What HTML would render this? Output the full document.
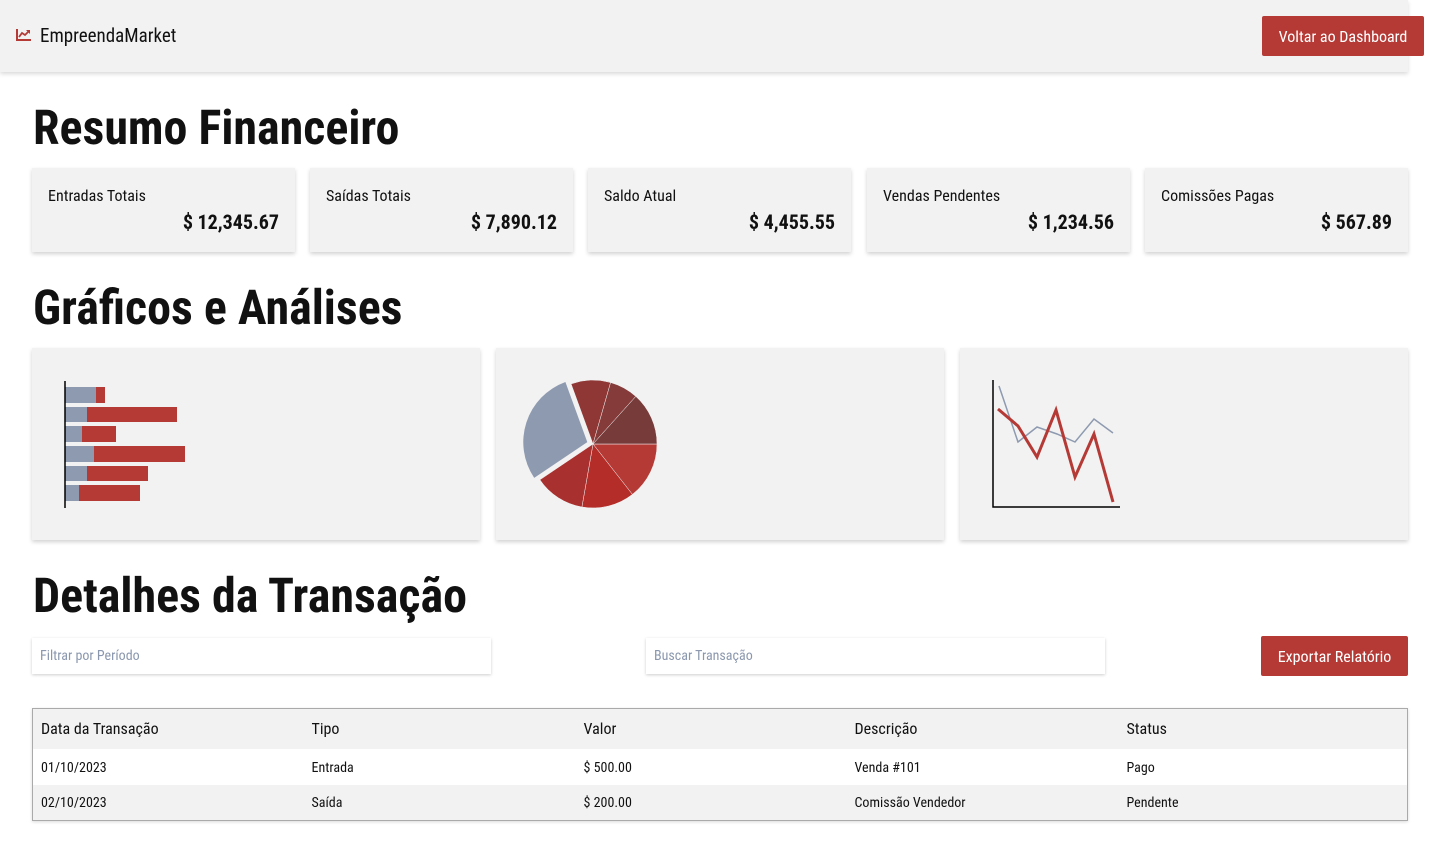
<!DOCTYPE html>
<html><head><meta charset="utf-8"><style>
*{margin:0;padding:0;box-sizing:border-box}
body{width:1430px;height:850px;background:#fff;font-family:"Roboto Condensed","Liberation Sans Narrow","Liberation Sans",sans-serif;color:#111;position:relative;overflow:hidden}
.abs{position:absolute}
.hdr{left:0;top:0;width:1408px;height:72px;background:#f2f2f2;box-shadow:0 2px 4px rgba(0,0,0,.15)}
.btn{background:#b53a36;color:#fff;font-size:16px;display:flex;align-items:center;justify-content:center;border-radius:2px}
h1{position:absolute;left:33px;font-size:48px;font-weight:bold;letter-spacing:0}
.card{background:#f2f2f2;box-shadow:0 2px 4px rgba(0,0,0,.18);top:168px;width:263px;height:84px}
.card .l{position:absolute;left:16px;top:18px;font-size:16px}
.card .v{position:absolute;right:16px;top:42px;font-size:20px;font-weight:bold}
.ch{top:348px;width:448px;height:192px;background:#f2f2f2;box-shadow:0 2px 4px rgba(0,0,0,.18)}
.inp{top:638px;width:459px;height:36px;background:#fff;box-shadow:0 1px 3px rgba(0,0,0,.2);font-size:14px;color:#8a97ad;padding:10px 8px}
table{position:absolute;left:32px;top:708px;width:1376px;border:1px solid #aaa;border-collapse:collapse;box-shadow:0 1px 3px rgba(0,0,0,.15);table-layout:fixed}
td,th{text-align:left;font-weight:normal;padding:0 8px}
th{height:40px;background:#f2f2f2;font-size:16px}
td{height:36px;font-size:14px;padding-top:2px}
tr.g td{background:#f2f2f2}
</style></head><body>
<div class="abs hdr"></div>
<svg class="abs" style="left:16px;top:28px" width="16" height="14" viewBox="0 0 16 14"><path d="M1 1V12H15" stroke="#b53a36" stroke-width="2" fill="none"/><path d="M3 9L6 5L9 7L13 3" stroke="#b53a36" stroke-width="1.8" fill="none"/><path d="M10 2H14V6Z" fill="#b53a36"/></svg>
<div class="abs" style="left:40px;top:24px;font-size:19px">EmpreendaMarket</div>
<div class="abs btn" style="left:1262px;top:16px;width:162px;height:40px">Voltar ao Dashboard</div>
<h1 style="top:99px">Resumo Financeiro</h1>
<div class="abs card" style="left:32px"><div class="l">Entradas Totais</div><div class="v">$ 12,345.67</div></div>
<div class="abs card" style="left:310px"><div class="l">Saídas Totais</div><div class="v">$ 7,890.12</div></div>
<div class="abs card" style="left:588px"><div class="l">Saldo Atual</div><div class="v">$ 4,455.55</div></div>
<div class="abs card" style="left:867px"><div class="l">Vendas Pendentes</div><div class="v">$ 1,234.56</div></div>
<div class="abs card" style="left:1145px"><div class="l">Comissões Pagas</div><div class="v">$ 567.89</div></div>
<h1 style="top:279px">Gráficos e Análises</h1>
<div class="abs ch" style="left:32px"></div>
<div class="abs ch" style="left:496px"></div>
<div class="abs ch" style="left:960px"></div>
<svg class="abs" style="left:0;top:0" width="1430" height="850">
<g fill="#8e9ab0"><rect x="65" y="387" width="31" height="16"/><rect x="65" y="407" width="22" height="15"/><rect x="65" y="426" width="17" height="16"/><rect x="65" y="446" width="29" height="16"/><rect x="65" y="466" width="22" height="15"/><rect x="65" y="485" width="14" height="16"/></g>
<g fill="#b53a36"><rect x="96" y="387" width="9" height="16"/><rect x="87" y="407" width="90" height="15"/><rect x="82" y="426" width="34" height="16"/><rect x="94" y="446" width="91" height="16"/><rect x="87" y="466" width="61" height="15"/><rect x="79" y="485" width="61" height="16"/></g>
<line x1="65" y1="381" x2="65" y2="508" stroke="#000" stroke-width="1.5"/>
<g stroke="#f2f2f2" stroke-width="0.5">
<path d="M593 444L657 444A64 64 0 0 1 632.4 494.4Z" fill="#b53a36"/>
<path d="M593 444L632.4 494.4A64 64 0 0 1 581.9 507Z" fill="#b52d28"/>
<path d="M593 444L581.9 507A64 64 0 0 1 539.9 479.8Z" fill="#a8302e"/>
<path d="M593 444L571.1 383.9A64 64 0 0 1 610.6 382.5Z" fill="#8e3735"/>
<path d="M593 444L610.6 382.5A64 64 0 0 1 635.8 396.4Z" fill="#843b39"/>
<path d="M593 444L635.8 396.4A64 64 0 0 1 657 444Z" fill="#773b3a"/>
</g>
<path d="M587.3 442.1L534.2 477.9A64 64 0 0 1 565.4 382Z" fill="#8e9ab0"/>
<path d="M993 380V507H1120" stroke="#000" stroke-width="1.5" fill="none"/>
<polyline points="999,386 1018,442 1037,427 1057,434 1075,442 1094,419 1113,433" stroke="#8e9ab0" stroke-width="1.5" fill="none"/>
<polyline points="998,409 1018,426 1037,457 1056,410 1075,477 1094,434 1113,502" stroke="#b53a36" stroke-width="3" fill="none"/>
</svg>
<h1 style="top:567px">Detalhes da Transação</h1>
<div class="abs inp" style="left:32px">Filtrar por Período</div>
<div class="abs inp" style="left:646px">Buscar Transação</div>
<div class="abs btn" style="left:1261px;top:636px;width:147px;height:40px">Exportar Relatório</div>
<table>
<colgroup><col style="width:271px"><col style="width:272px"><col style="width:271px"><col style="width:272px"><col></colgroup>
<tr><th>Data da Transação</th><th>Tipo</th><th>Valor</th><th>Descrição</th><th>Status</th></tr>
<tr><td>01/10/2023</td><td>Entrada</td><td>$ 500.00</td><td>Venda #101</td><td>Pago</td></tr>
<tr class="g"><td>02/10/2023</td><td>Saída</td><td>$ 200.00</td><td>Comissão Vendedor</td><td>Pendente</td></tr>
</table>
</body></html>
